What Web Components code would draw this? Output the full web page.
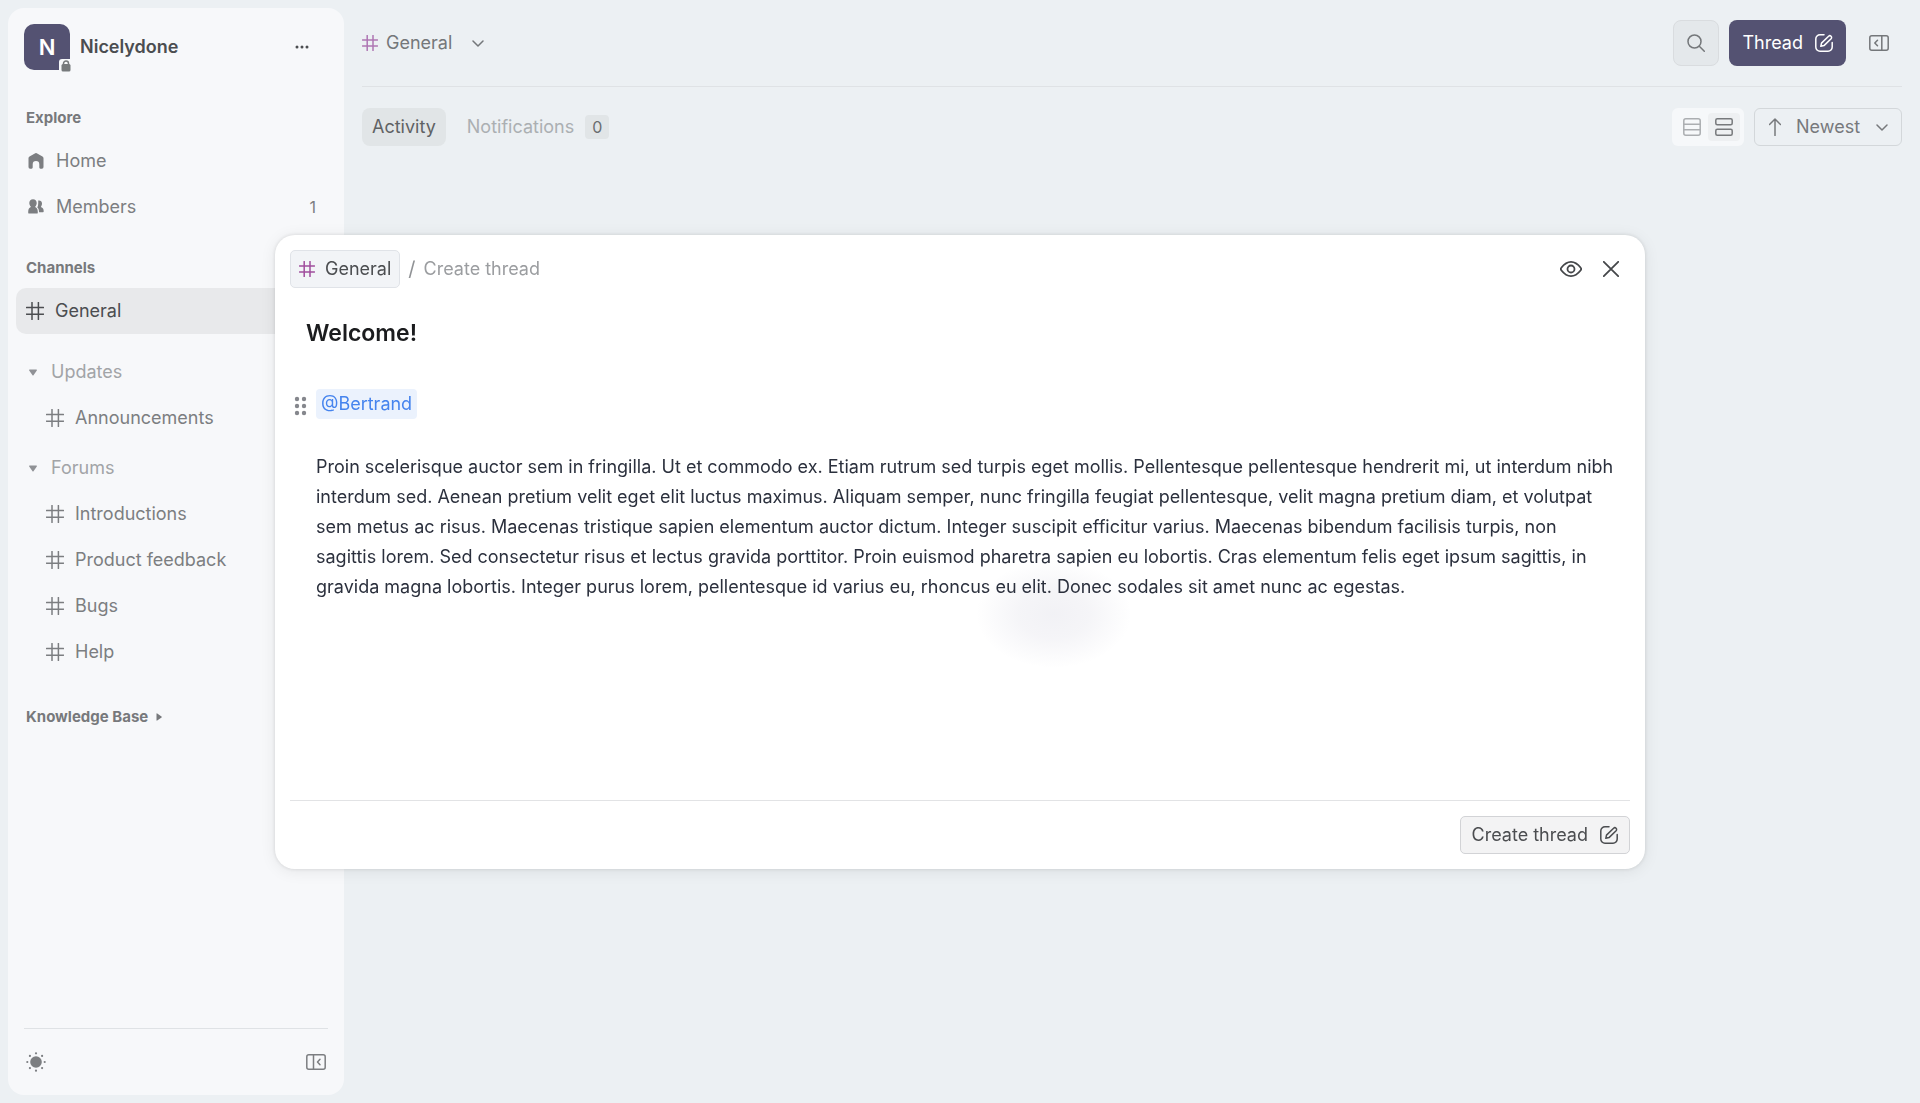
<!DOCTYPE html>
<html lang="en">
<head>
<meta charset="utf-8">
<title>General</title>
<style>
  :root {
    --page: #ecf0f3;
    --panel: #f7f8fa;
    --brand: #545272;
    --text: #4b4d50;
    --muted: #7c7e81;
    --faint: #a2a4a7;
    --accent: #a04d9d;
    --line: #dfe2e5;
  }
  html, body {
    height: 100%;
  }
  body {
    margin: 0;
    background: var(--page);
    color: var(--text);
    font: 18px/24px Inter, "Liberation Sans", sans-serif;
  }
</style>
</head>
<body>
<wc-workspace></wc-workspace>

<script>
const BUTTON_RESET = `
  button {
    display: flex;
    align-items: center;
    justify-content: center;
    box-sizing: border-box;
    margin: 0;
    padding: 0;
    border: 0;
    background: none;
    color: inherit;
    font: inherit;
    cursor: pointer;
  }
`;

// Each entry: [viewBox width, viewBox height, markup]
const ICONS = {
  hash: [18, 18, '<path d="M6 .5v17M12.4 .5v17M.5 5.6h17M.5 12.2h17"/>'],
  smallHash: [16, 16, '<path d="M5.2 .5v15M11 .5v15M.5 5h15M.5 11h15"/>'],
  home: [16, 16, '<path fill="currentColor" stroke="none" d="M7.3 .3a1.5 1.5 0 0 1 1.4 0l5.8 3.2A1.9 1.9 0 0 1 15.5 5.2v8.9a1.6 1.6 0 0 1-1.6 1.6h-1.5a1.1 1.1 0 0 1-1.1-1.1v-3.2a3.3 3.3 0 0 0-6.6 0v3.2a1.1 1.1 0 0 1-1.1 1.1H2.1A1.6 1.6 0 0 1 .5 14.1V5.2a1.9 1.9 0 0 1 1-1.7z"/>'],
  members: [16, 16, '<g fill="currentColor" stroke="none"><path d="M5 .3c2.2 0 3.7 1.6 3.7 3.7 0 1.6-.7 2.8-1.5 3.5 0 .7 .5 .9 1.1 1.2 1.100 .6 1.500 2.200 1.500 4.700 0 .8-.4 1.200-1.200 1.200H1.400c-.8 0-1.200-.4-1.200-1.200 0-2.500 .4-4.100 1.500-4.700 .6-.3 1.100-.5 1.100-1.200-.8-.7-1.500-1.900-1.500-3.500C1.300 1.900 2.800 .3 5 .3z"/><path d="M10.200 1.600c2-.5 3.800 .8 3.800 3 0 1.400-.5 2.300-1 2.900 0 .6 .3 .8 .8 1.100 1.100 .6 1.900 1.700 1.900 3.700 0 .7-.4 1-1 1h-3.600c-.1-2.200-.6-3.800-1.800-4.700 .6-1 .9-2.300 .9-4 0-1.200 .1-2.100 0-3z"/></g>'],
  dots: [14, 4, '<g fill="currentColor" stroke="none"><circle cx="2" cy="2" r="1.5"/><circle cx="7" cy="2" r="1.5"/><circle cx="12" cy="2" r="1.5"/></g>'],
  lock: [10, 12, '<rect x=".5" y="4" width="9" height="7.5" rx="1.5" fill="currentColor" stroke="none"/><path d="M2.5 5V3.5a2.5 2.5 0 0 1 5 0V5"/>'],
  triangle: [8, 7, '<path fill="currentColor" stroke="none" d="M.6 .5h6.8c.5 0 .7 .5 .4 .9L4.5 6.2a.6 .6 0 0 1-1 0L.2 1.4C-.1 1 .1 .5 .6 .5z"/>'],
  caretRight: [6, 8, '<path fill="currentColor" stroke="none" d="M.5 .8v6.4c0 .4 .4 .6 .7 .4l4.3-3.2a.5 .5 0 0 0 0-.8L1.2 .4C.9 .2 .5 .4 .5 .8z"/>'],
  chevron: [12, 7, '<path d="M1 1l5 5 5-5"/>'],
  arrowUp: [12, 18, '<path d="M6 17.5V1M.5 6.5 6 1l5.5 5.5"/>'],
  search: [18, 18, '<circle cx="7.5" cy="7.5" r="6.5"/><path d="M12.3 12.3l5 5"/>'],
  compose: [18, 18, '<path d="M9 .8H5A4.2 4.2 0 0 0 .8 5v8A4.2 4.2 0 0 0 5 17.2h8a4.2 4.2 0 0 0 4.2-4.2V8.5"/><path d="M13.6 2.300a1.700 1.700 0 0 1 2.500 2.400L9 11.600l-3.200 .7 .7-3.200z"/>'],
  panel: [20, 16, '<rect x=".8" y=".8" width="18.4" height="14.4" rx="2"/><path d="M7.5 1v14M14 5.200 11.500 8l2.500 2.800"/>'],
  panelRight: [20, 16, '<rect x=".8" y=".8" width="18.4" height="14.4" rx="2"/><path d="M12.8 1v14M8.500 5.200 5.800 8l2.700 2.800"/>'],
  list: [18, 18, '<rect x=".8" y=".8" width="16.4" height="16.4" rx="2"/><path d="M1 6.3h16M1 11.7h16"/>'],
  cards: [18, 18, '<rect x=".8" y=".8" width="16.4" height="6" rx="1.5"/><rect x=".8" y="11.2" width="16.4" height="6" rx="1.5"/>'],
  sun: [20, 20, '<g fill="currentColor" stroke="none"><circle cx="10" cy="10" r="5.8"/><circle cx="10" cy="1.3" r="1.1"/><circle cx="10" cy="18.7" r="1.1"/><circle cx="1.3" cy="10" r="1.1"/><circle cx="18.7" cy="10" r="1.1"/><circle cx="3.9" cy="3.9" r="1.1"/><circle cx="16.1" cy="3.9" r="1.1"/><circle cx="3.9" cy="16.1" r="1.1"/><circle cx="16.1" cy="16.1" r="1.1"/></g>'],
  eye: [22, 16, '<path d="M1.3 9.2a1.9 1.9 0 0 1 0-2.4C3.7 3.7 7 .9 11 .9s7.3 2.8 9.7 5.9a1.9 1.9 0 0 1 0 2.4c-2.4 3.1-5.7 5.9-9.7 5.9s-7.3-2.8-9.7-5.9z"/><circle cx="11" cy="8" r="3.5"/>'],
  close: [16, 16, '<path d="M.8 .8l14.4 14.4M15.2 .8 .8 15.2"/>'],
  grip: [13, 20, '<g fill="currentColor" stroke="none"><circle cx="3" cy="3" r="2.2"/><circle cx="10" cy="3" r="2.2"/><circle cx="3" cy="10" r="2.2"/><circle cx="10" cy="10" r="2.2"/><circle cx="3" cy="17" r="2.2"/><circle cx="10" cy="17" r="2.2"/></g>'],
};

/**
 * Icon, picked by its name attribute
 */
class Icon extends HTMLElement {
  constructor() {
    super();
    this.attachShadow({ mode: 'open' });
  }

  connectedCallback() {
    const [w, h, markup] = ICONS[this.getAttribute('name')];
    const weight = this.getAttribute('weight') || '1.5';
    this.shadowRoot.innerHTML = /*html*/ `
      <style>
        :host {
          display: inline-flex;
          flex: none;
        }
        svg {
          display: block;
        }
      </style>
      <svg width="${w}" height="${h}" viewBox="0 0 ${w} ${h}" fill="none" stroke="currentColor"
        stroke-width="${weight}" stroke-linecap="round" stroke-linejoin="round" aria-hidden="true">${markup}</svg>
    `;
  }
}
customElements.define('wc-icon', Icon);

/**
 * Base class, clones the template of the subclass
 */
class BaseElement extends HTMLElement {
  constructor() {
    super();
    const template = document.createElement('template');
    template.innerHTML = this.constructor.html;
    this.attachShadow({ mode: 'open' });
    this.shadowRoot.appendChild(template.content.cloneNode(true));
  }
}

/**
 * Row of the sidebar
 */
class NavItem extends BaseElement {
  static html = /*html*/ `
    <style>
      :host {
        display: block;
        color: var(--muted);
      }
      a {
        display: flex;
        align-items: center;
        gap: 12px;
        height: 46px;
        padding: 0 20px 0 12px;
        box-sizing: border-box;
        border-radius: 10px;
        color: inherit;
        text-decoration: none;
      }
      :host([active]) {
        color: var(--text);
      }
      :host([active]) a {
        gap: 11px;
        padding-left: 10px;
        background: #e8e9eb;
      }
      :host([nested]) a {
        gap: 11px;
        padding-left: 30px;
      }
      .label {
        flex: 1;
      }
      ::slotted([slot="count"]) {
        font-size: 16px;
      }
    </style>
    <a href="#">
      <slot name="icon"></slot>
      <span class="label"><slot></slot></span>
      <slot name="count"></slot>
    </a>
  `;
}
customElements.define('wc-nav-item', NavItem);

/**
 * Collapsible group of channels
 */
class NavGroup extends BaseElement {
  static html = /*html*/ `
    <style>
      ${BUTTON_RESET}
      :host {
        display: block;
        margin-top: 4px;
      }
      button {
        gap: 14px;
        height: 46px;
        padding: 0 13px;
        color: var(--faint);
      }
      wc-icon {
        color: #909296;
      }
    </style>
    <button type="button"><wc-icon name="triangle"></wc-icon><span></span></button>
    <div class="items"><slot></slot></div>
  `;

  connectedCallback() {
    this.shadowRoot.querySelector('span').textContent = this.getAttribute('label');
    this.shadowRoot.querySelector('button').addEventListener('click', () => {
      const items = this.shadowRoot.querySelector('.items');
      items.hidden = !items.hidden;
    });
  }
}
customElements.define('wc-nav-group', NavGroup);

/**
 * Sidebar
 */
class Sidebar extends BaseElement {
  static html = /*html*/ `
    <style>
      ${BUTTON_RESET}
      :host {
        display: flex;
        flex-direction: column;
        box-sizing: border-box;
        padding: 16px 8px 0;
        border-radius: 16px;
        background: var(--panel);
      }
      header {
        display: flex;
        align-items: center;
        gap: 10px;
        padding: 0 16px 0 8px;
      }
      .logo {
        position: relative;
        display: grid;
        place-items: center;
        width: 46px;
        height: 46px;
        border-radius: 10px;
        background: var(--brand);
        color: #fff;
        font-size: 22px;
        font-weight: 600;
      }
      .lock {
        position: absolute;
        right: -2px;
        bottom: -2px;
        display: flex;
        padding: 1px 1px 0 2px;
        border-radius: 3px 0 0 0;
        background: var(--panel);
        color: #777a7c;
      }
      .name {
        flex: 1;
        font-weight: 600;
      }
      header button {
        width: 36px;
        height: 36px;
      }
      h2 {
        margin: 0;
        padding: 0 10px;
        color: #77797c;
        font-size: 15px;
        font-weight: 700;
        line-height: 20px;
      }
      nav {
        flex: 1;
        display: flex;
        flex-direction: column;
        padding-top: 38px;
      }
      section {
        margin-bottom: 28px;
      }
      h2 + * {
        margin-top: 10px;
      }
      wc-nav-item + wc-nav-group {
        margin-top: 15px;
      }
      .base {
        gap: 8px;
        margin-top: 4px;
        font: inherit;
      }
      footer {
        display: flex;
        align-items: center;
        justify-content: space-between;
        height: 66px;
        margin: 0 8px;
        border-top: 1px solid var(--line);
        color: var(--muted);
      }
      footer button {
        width: 24px;
        height: 24px;
      }
    </style>
    <header>
      <div class="logo">N<span class="lock"><wc-icon name="lock"></wc-icon></span></div>
      <span class="name">Nicelydone</span>
      <button type="button" aria-label="More"><wc-icon name="dots"></wc-icon></button>
    </header>
    <nav>
      <section>
        <h2>Explore</h2>
        <wc-nav-item><wc-icon slot="icon" name="home"></wc-icon>Home</wc-nav-item>
        <wc-nav-item><wc-icon slot="icon" name="members"></wc-icon>Members<span slot="count">1</span></wc-nav-item>
      </section>
      <section>
        <h2>Channels</h2>
        <wc-nav-item active><wc-icon slot="icon" name="hash"></wc-icon>General</wc-nav-item>
        <wc-nav-group label="Updates">
          <wc-nav-item nested><wc-icon slot="icon" name="hash"></wc-icon>Announcements</wc-nav-item>
        </wc-nav-group>
        <wc-nav-group label="Forums">
          <wc-nav-item nested><wc-icon slot="icon" name="hash"></wc-icon>Introductions</wc-nav-item>
          <wc-nav-item nested><wc-icon slot="icon" name="hash"></wc-icon>Product feedback</wc-nav-item>
          <wc-nav-item nested><wc-icon slot="icon" name="hash"></wc-icon>Bugs</wc-nav-item>
          <wc-nav-item nested><wc-icon slot="icon" name="hash"></wc-icon>Help</wc-nav-item>
        </wc-nav-group>
      </section>
      <h2><button class="base" type="button">Knowledge Base<wc-icon name="caretRight"></wc-icon></button></h2>
    </nav>
    <footer>
      <button type="button" aria-label="Theme"><wc-icon name="sun"></wc-icon></button>
      <button type="button" aria-label="Collapse"><wc-icon name="panel"></wc-icon></button>
    </footer>
  `;
}
customElements.define('wc-sidebar', Sidebar);

/**
 * Bar over the channel
 */
class ChannelHeader extends BaseElement {
  static html = /*html*/ `
    <style>
      ${BUTTON_RESET}
      :host {
        display: flex;
        align-items: center;
        justify-content: space-between;
        padding: 20px 0;
        border-bottom: 1px solid var(--line);
        color: #74777a;
      }
      .actions {
        display: flex;
        align-items: center;
        gap: 10px;
      }
      .channel {
        gap: 8px;
      }
      .channel wc-icon:first-child {
        color: #ae75b3;
      }
      .channel wc-icon:last-child {
        margin-left: 12px;
      }
      .search {
        width: 46px;
        height: 46px;
        border: 1px solid #d9dcdf;
        border-radius: 8px;
        background: #e4e8eb;
      }
      .thread {
        gap: 12px;
        height: 46px;
        padding: 0 13px;
        border-radius: 8px;
        background: var(--brand);
        color: #fff;
      }
      .side {
        width: 46px;
        height: 46px;
      }
    </style>
    <button type="button" class="channel">
      <wc-icon name="smallHash"></wc-icon>General<wc-icon name="chevron"></wc-icon>
    </button>
    <div class="actions">
      <button type="button" class="search" aria-label="Search"><wc-icon name="search"></wc-icon></button>
      <button type="button" class="thread">Thread<wc-icon name="compose"></wc-icon></button>
      <button type="button" class="side" aria-label="Details"><wc-icon name="panelRight"></wc-icon></button>
    </div>
  `;
}
customElements.define('wc-channel-header', ChannelHeader);

/**
 * Tabs, view switch and sort order
 */
class FeedToolbar extends BaseElement {
  static html = /*html*/ `
    <style>
      ${BUTTON_RESET}
      :host {
        display: flex;
        align-items: center;
        justify-content: space-between;
        margin-top: 21px;
        color: #77797c;
      }
      .tabs, .tools, .views {
        display: flex;
        align-items: center;
        gap: 10px;
      }
      .tabs {
        gap: 11px;
      }
      .tab {
        gap: 11px;
        height: 38px;
        padding: 0 10px;
        border-radius: 8px;
        color: #abafb2;
      }
      .tab.on {
        background: #e1e5e7;
        color: #5f6264;
      }
      .badge {
        padding: 0 7px;
        border-radius: 4px;
        background: #e1e5e7;
        color: #6a6d70;
        font-size: 16px;
      }
      .views {
        gap: 0;
        height: 38px;
        padding: 0 4px;
        box-sizing: border-box;
        border-radius: 6px;
        background: #f6f8fa;
      }
      .views button {
        width: 32px;
        height: 28px;
        border-radius: 4px;
        color: #abaeb1;
      }
      .views .on {
        background: #eef0f2;
        color: #77797c;
      }
      .sort {
        display: flex;
        align-items: center;
        gap: 15px;
        height: 38px;
        padding: 0 13px 0 14px;
        box-sizing: border-box;
        border: 1px solid #d3d7da;
        border-radius: 6px;
      }
      select {
        appearance: none;
        padding: 0;
        border: 0;
        background: none;
        color: inherit;
        font: inherit;
      }
    </style>
    <div class="tabs">
      <button type="button" class="tab on">Activity</button>
      <button type="button" class="tab">Notifications<span class="badge">0</span></button>
    </div>
    <div class="tools">
      <div class="views">
        <button type="button" aria-label="List view"><wc-icon name="list"></wc-icon></button>
        <button type="button" class="on" aria-label="Card view"><wc-icon name="cards"></wc-icon></button>
      </div>
      <label class="sort">
        <wc-icon name="arrowUp"></wc-icon>
        <select aria-label="Sort"><option>Newest</option></select>
        <wc-icon name="chevron"></wc-icon>
      </label>
    </div>
  `;
}
customElements.define('wc-feed-toolbar', FeedToolbar);

/**
 * Dialog for a new thread, the slot holds the body text
 */
class ThreadDialog extends BaseElement {
  static html = /*html*/ `
    <style>
      ${BUTTON_RESET}
      :host {
        position: fixed;
        inset: 0;
        display: flex;
        align-items: center;
        justify-content: center;
        padding: 32px;
      }
      .dialog {
        display: flex;
        flex-direction: column;
        box-sizing: border-box;
        width: 100%;
        max-width: 1370px;
        padding: 15px;
        border-radius: 20px;
        background: #fff;
        box-shadow: 0 0 4px rgba(0, 0, 0, 0.12), 0 2px 16px rgba(0, 0, 0, 0.08);
      }
      header, .icons {
        display: flex;
        align-items: center;
      }
      header {
        gap: 8px;
      }
      .channel {
        gap: 10px;
        height: 38px;
        padding: 0 8px;
        border: 1px solid #e0e3e8;
        border-radius: 5px;
        background: #f2f4f7;
        color: var(--text);
      }
      .channel wc-icon {
        color: var(--accent);
      }
      .slash {
        color: #909295;
        font-size: 20px;
      }
      .crumb {
        flex: 1;
        color: #9b9da0;
      }
      .icons {
        gap: 2px;
        color: #45474a;
      }
      .icons button {
        width: 38px;
        height: 38px;
      }
      .title {
        margin: 29px 0 0;
        padding: 0 16px;
        border: 0;
        outline: 0;
        color: #1b1c1e;
        font: 600 23px/32px Inter, "Liberation Sans", sans-serif;
      }
      .body {
        min-height: 413px;
        margin-top: 38px;
        background: radial-gradient(ellipse 78px 54px at 57% 227px, rgba(84, 82, 130, 0.08), rgba(84, 82, 130, 0.06) 45%, transparent);
        color: #2b303d;
      }
      .block {
        display: flex;
        align-items: center;
        gap: 9px;
      }
      .grip {
        padding: 9px 0 0 4px;
        color: #85878d;
      }
      .mention {
        padding: 3px 5px;
        border-radius: 4px;
        background: #ebf2fd;
        color: #4684ee;
        text-decoration: none;
      }
      .text {
        margin: 30px 16px 0 26px;
        outline: 0;
        line-height: 30px;
      }
      footer {
        display: flex;
        justify-content: flex-end;
        padding-top: 15px;
        border-top: 1px solid #e2e3e5;
      }
      .submit {
        gap: 12px;
        height: 38px;
        padding: 0 11px;
        border: 1px solid #d2d3d6;
        border-radius: 5px;
        background: #f3f3f4;
        color: var(--text);
      }
    </style>
    <div class="dialog" role="dialog" aria-label="Create thread">
      <header>
        <button type="button" class="channel"><wc-icon name="smallHash"></wc-icon>General</button>
        <span class="slash">/</span>
        <span class="crumb">Create thread</span>
        <div class="icons">
          <button type="button" aria-label="Preview"><wc-icon name="eye" weight="1.8"></wc-icon></button>
          <button type="button" aria-label="Close"><wc-icon name="close" weight="1.8"></wc-icon></button>
        </div>
      </header>
      <input class="title" type="text" aria-label="Title" value="Welcome!">
      <div class="body">
        <div class="block">
          <span class="grip"><wc-icon name="grip"></wc-icon></span>
          <a class="mention" href="#">@Bertrand</a>
        </div>
        <div class="text" contenteditable="true" role="textbox" aria-label="Body" spellcheck="false"><slot></slot></div>
      </div>
      <footer>
        <button type="button" class="submit">Create thread<wc-icon name="compose"></wc-icon></button>
      </footer>
    </div>
  `;
}
customElements.define('wc-thread-dialog', ThreadDialog);

/**
 * Whole page
 */
class Workspace extends BaseElement {
  static html = /*html*/ `
    <style>
      :host {
        display: grid;
        grid-template-columns: 336px 1fr;
        gap: 18px;
        box-sizing: border-box;
        min-height: 100%;
        padding: 8px;
      }
      main {
        margin: -8px 10px 0 0;
      }
    </style>
    <wc-sidebar></wc-sidebar>
    <main>
      <wc-channel-header></wc-channel-header>
      <wc-feed-toolbar></wc-feed-toolbar>
    </main>
    <wc-thread-dialog>Proin scelerisque auctor sem in fringilla. Ut et commodo ex. Etiam rutrum sed turpis eget mollis. Pellentesque pellentesque hendrerit mi, ut interdum nibh interdum sed. Aenean pretium velit eget elit luctus maximus. Aliquam semper, nunc fringilla feugiat pellentesque, velit magna pretium diam, et volutpat sem metus ac risus. Maecenas tristique sapien elementum auctor dictum. Integer suscipit efficitur varius. Maecenas bibendum facilisis turpis, non sagittis lorem. Sed consectetur risus et lectus gravida porttitor. Proin euismod pharetra sapien eu lobortis. Cras elementum felis eget ipsum sagittis, in gravida magna lobortis. Integer purus lorem, pellentesque id varius eu, rhoncus eu elit. Donec sodales sit amet nunc ac egestas.</wc-thread-dialog>
  `;
}
customElements.define('wc-workspace', Workspace);
</script>
</body>
</html>
